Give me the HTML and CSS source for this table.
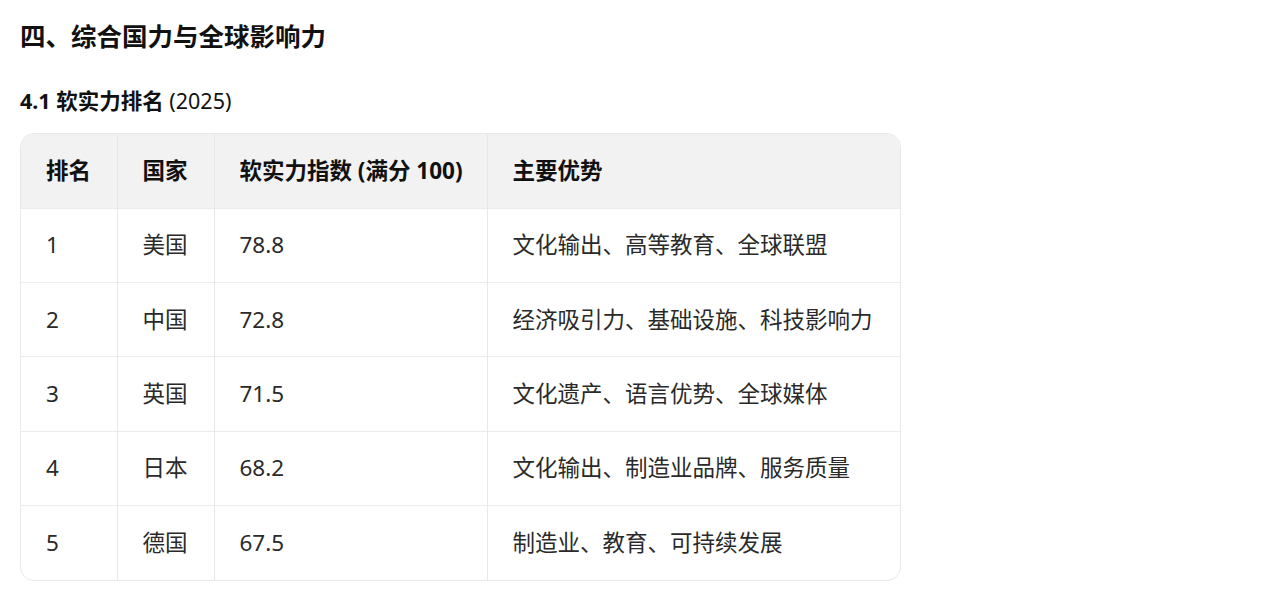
FILE: index.html
```html
<!DOCTYPE html>
<html lang="zh">
<head>
<meta charset="utf-8">
<link rel="stylesheet" href="styles.css">
</head>
<body>
<h2 class="title">四、综合国力与全球影响力</h2>
<h3 class="subtitle">4.1 软实力排名 <span class="year">(2025)</span></h3>
<div class="table-wrap">
<table class="rank">
<colgroup>
<col class="c1"><col class="c2"><col class="c3"><col class="c4">
</colgroup>
<thead>
<tr><th>排名</th><th>国家</th><th>软实力指数 (满分 100)</th><th>主要优势</th></tr>
</thead>
<tbody>
<tr><td>1</td><td>美国</td><td>78.8</td><td>文化输出、高等教育、全球联盟</td></tr>
<tr><td>2</td><td>中国</td><td>72.8</td><td>经济吸引力、基础设施、科技影响力</td></tr>
<tr><td>3</td><td>英国</td><td>71.5</td><td>文化遗产、语言优势、全球媒体</td></tr>
<tr><td>4</td><td>日本</td><td>68.2</td><td>文化输出、制造业品牌、服务质量</td></tr>
<tr><td>5</td><td>德国</td><td>67.5</td><td>制造业、教育、可持续发展</td></tr>
</tbody>
</table>
</div>
</body>
</html>
```
FILE: styles.css
```css
html, body {
  margin: 0;
  background: #ffffff;
}
body {
  padding: 18px 20px 0 20px;
  font-family: "Noto Sans", "Noto Sans CJK SC", sans-serif;
  color: #222222;
}
.title {
  margin: 0;
  font-size: 25.5px;
  line-height: 36px;
  font-weight: 700;
  color: #111111;
}
.subtitle {
  margin: 32px 0 17px 0;
  font-size: 21.5px;
  line-height: 30px;
  font-weight: 700;
  color: #111111;
}
.year {
  font-weight: 400;
}
.table-wrap {
  width: 881px;
  border: 1px solid #e8e8e8;
  border-radius: 14px;
  overflow: hidden;
  box-sizing: border-box;
}
.rank {
  width: 100%;
  border-collapse: collapse;
  table-layout: fixed;
  font-size: 22.5px;
}
.c1 { width: 96px; }
.c2 { width: 97px; }
.c3 { width: 273px; }
.c4 { width: auto; }
.rank th, .rank td {
  height: 74.4px;
  padding: 0 24px 0 25px;
  text-align: left;
  vertical-align: middle;
  border-left: 1px solid #e8e8e8;
  border-top: 1px solid #ececec;
  box-sizing: border-box;
  white-space: nowrap;
  line-height: 32px;
}
.rank th:first-child, .rank td:first-child { border-left: none; }
.rank thead th {
  border-top: none;
  background: #f2f2f2;
  font-weight: 700;
  color: #111111;
  height: 74px;
}
.rank td { color: #2a2a2a; }
```
